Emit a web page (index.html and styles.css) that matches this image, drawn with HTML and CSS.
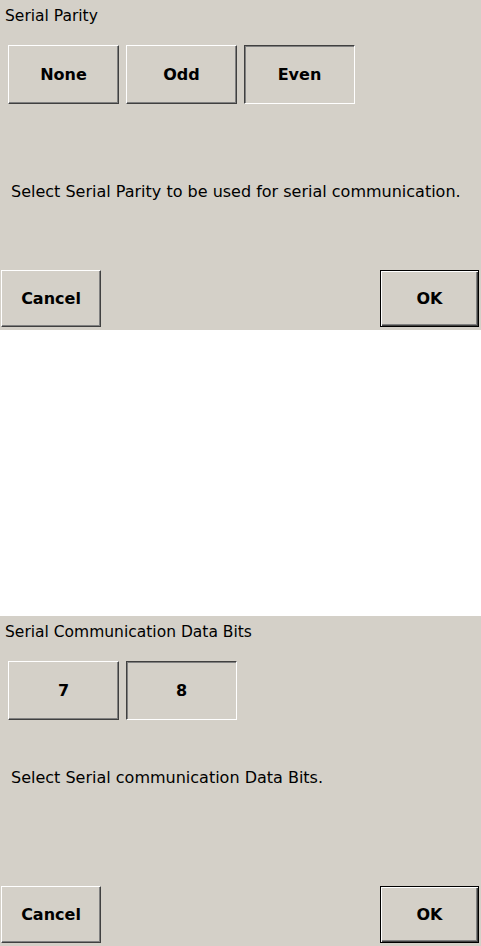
FILE: index.html
```html
<!DOCTYPE html>
<html>
<head>
<meta charset="utf-8">
<link rel="stylesheet" href="styles.css">
</head>
<body>
<section class="panel">
  <div class="title">Serial Parity</div>
  <div class="options">
    <div class="btn opt">None</div>
    <div class="btn opt">Odd</div>
    <div class="btn opt pressed">Even</div>
  </div>
  <div class="desc desc-parity">Select Serial Parity to be used for serial communication.</div>
  <div class="footer">
    <div class="btn action">Cancel</div>
    <div class="btn action default">OK</div>
  </div>
</section>
<section class="panel panel-second">
  <div class="title">Serial Communication Data Bits</div>
  <div class="options">
    <div class="btn opt">7</div>
    <div class="btn opt pressed">8</div>
  </div>
  <div class="desc desc-bits">Select Serial communication Data Bits.</div>
  <div class="footer">
    <div class="btn action">Cancel</div>
    <div class="btn action default">OK</div>
  </div>
</section>
</body>
</html>
```
FILE: styles.css
```css
html, body {
  margin: 0;
  padding: 0;
  background: #ffffff;
}
body {
  width: 481px;
  font-family: "DejaVu Sans", Verdana, sans-serif;
  font-size: 16px;
  color: #000;
}
.panel {
  box-sizing: border-box;
  height: 330px;
  background: #d4d0c8;
  display: flex;
  flex-direction: column;
  padding: 7px 2px 3px 0;
}
.panel-second {
  margin-top: 286px;
}
.title {
  font-size: 15.5px;
  line-height: 18px;
  padding-left: 5px;
}
.options {
  display: flex;
  gap: 7px;
  margin-top: 20px;
  padding-left: 8px;
}
.btn {
  box-sizing: border-box;
  display: flex;
  align-items: center;
  justify-content: center;
  font-weight: bold;
  background: #d4d0c8;
  border: 1px solid;
  border-color: #ffffff #404040 #404040 #ffffff;
  box-shadow: inset -1px -1px 0 #808080;
}
.opt {
  width: 111px;
  height: 59px;
}
.pressed {
  border-color: #404040 #ffffff #ffffff #404040;
  box-shadow: inset 1px 1px 0 #808080;
}
.desc {
  line-height: 18px;
  padding-left: 11px;
}
.desc-parity {
  margin-top: 79px;
}
.desc-bits {
  margin-top: 49px;
}
.footer {
  margin-top: auto;
  display: flex;
  justify-content: space-between;
  padding-left: 1px;
}
.action {
  width: 100px;
  height: 57px;
}
.default {
  width: 99px;
  border: 1px solid #000;
  box-shadow: inset 1px 1px 0 #ffffff, inset -1px -1px 0 #404040, inset -2px -2px 0 #808080;
}
```
